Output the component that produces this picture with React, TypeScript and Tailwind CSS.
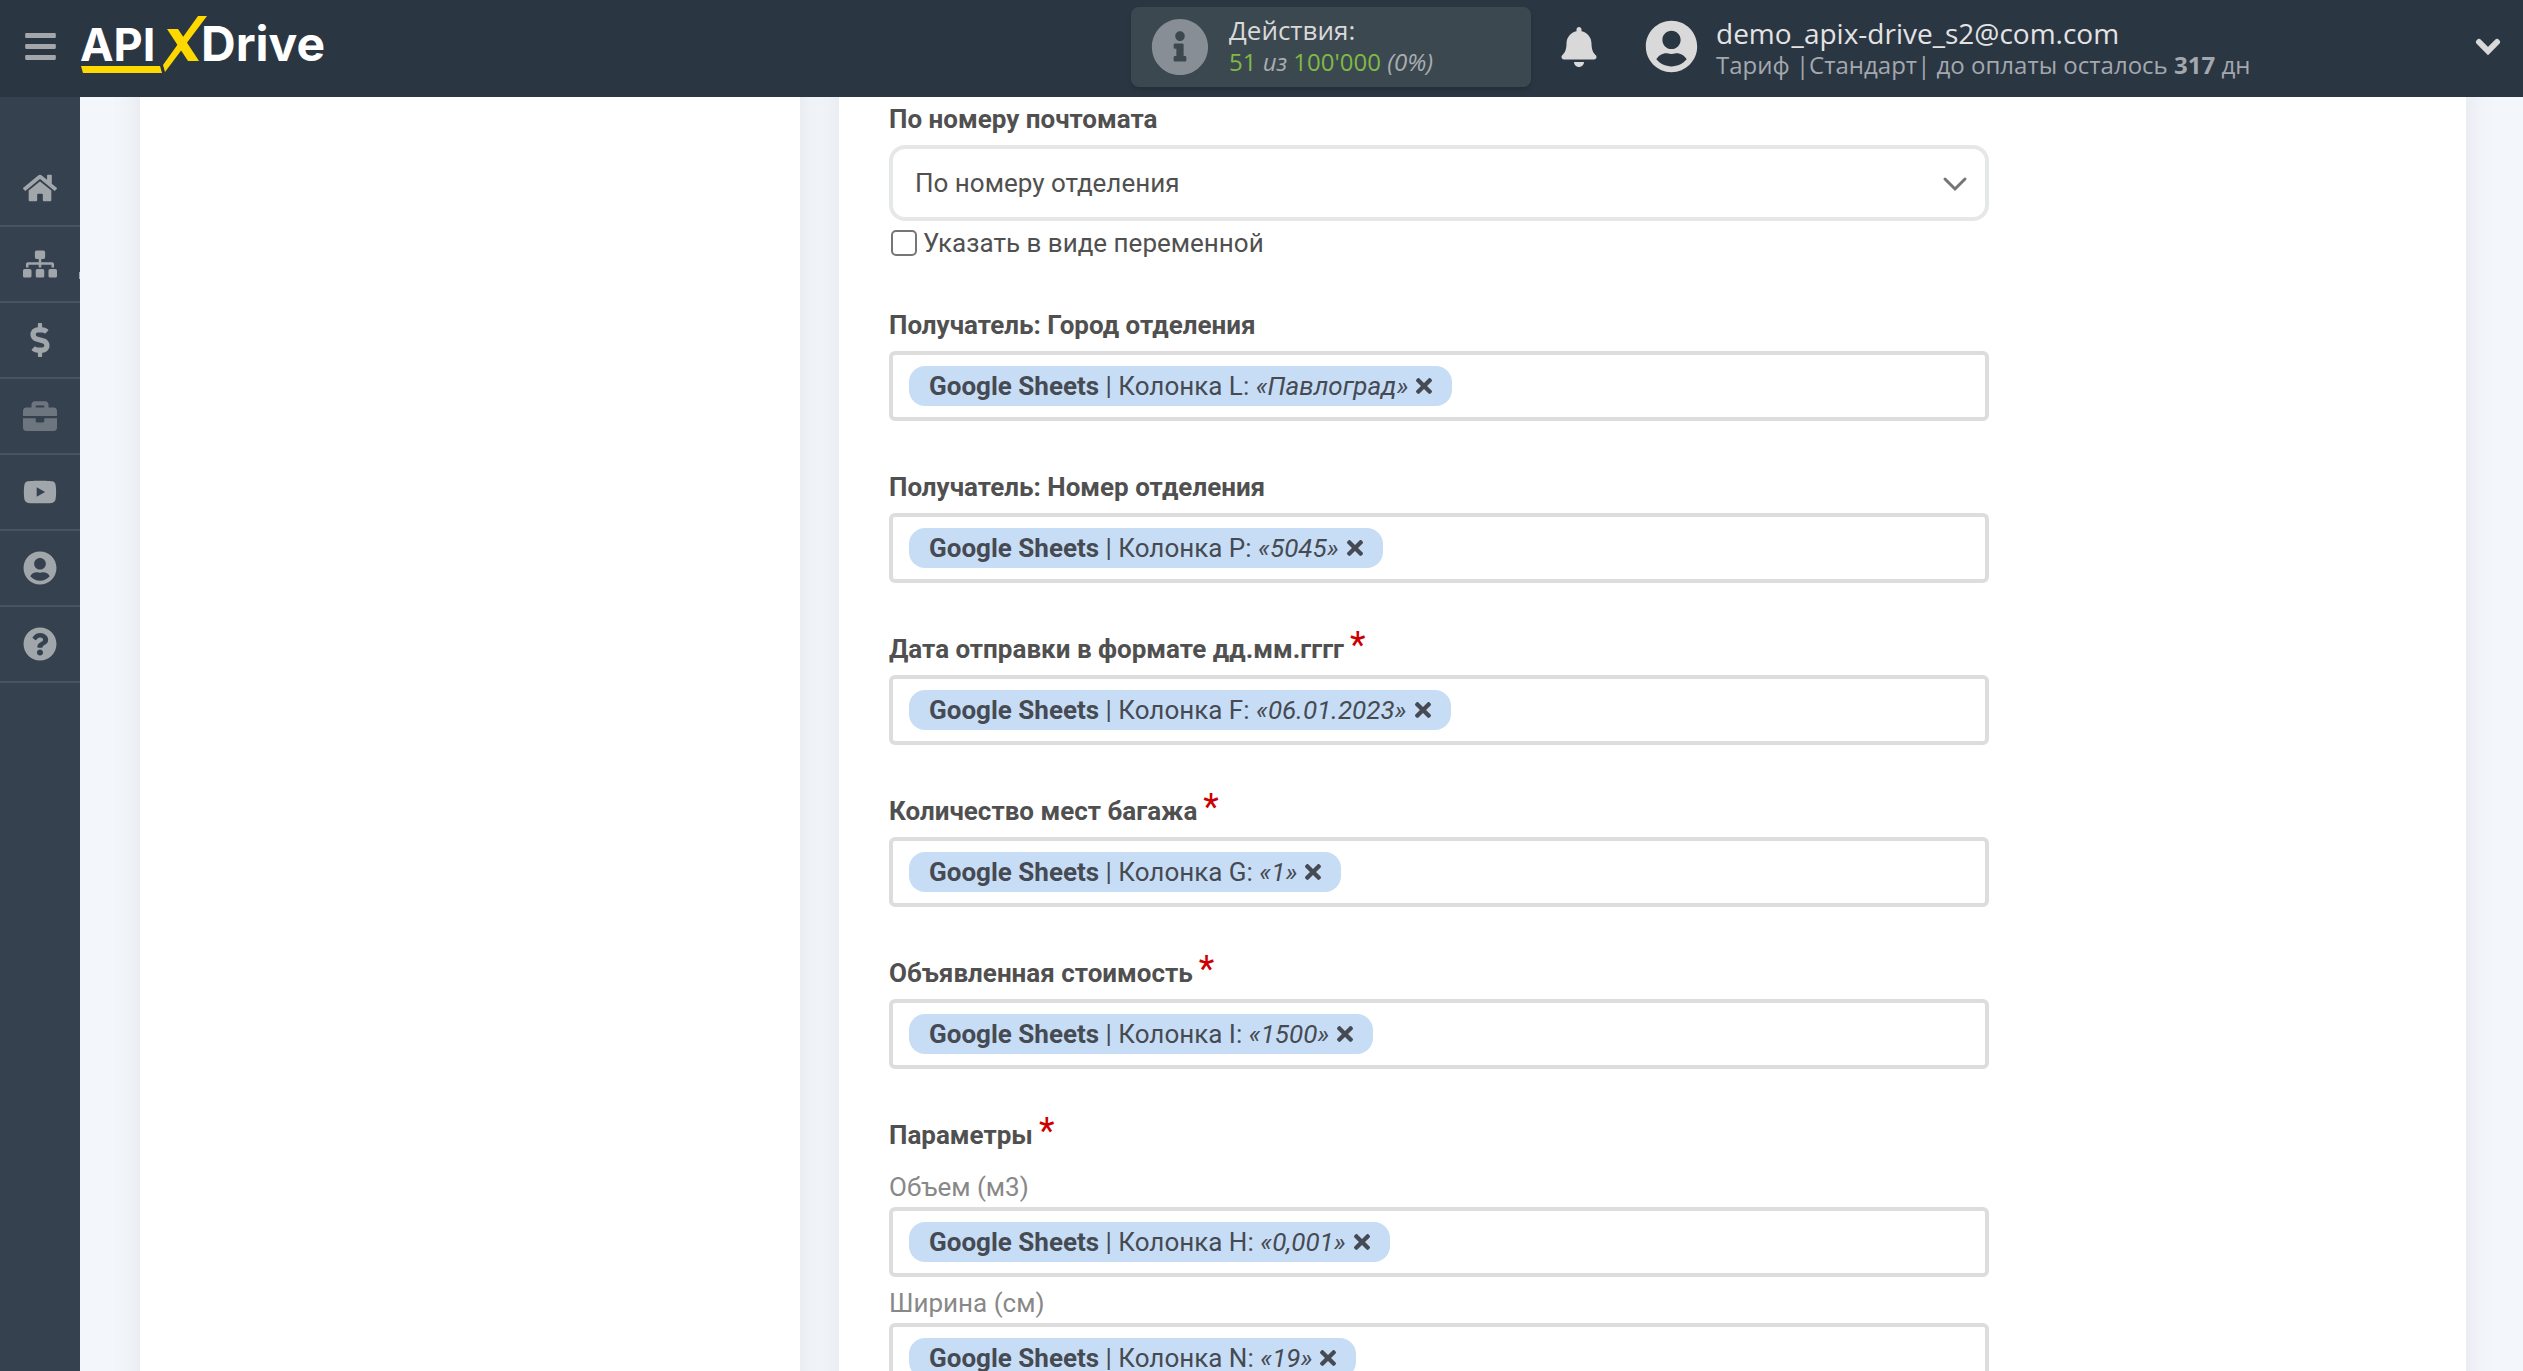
import { useId, useState } from 'react'
import type { ReactNode } from 'react'
import type { IconType } from 'react-icons'
import {
  FaBars,
  FaBell,
  FaBriefcase,
  FaDollarSign,
  FaHome,
  FaInfoCircle,
  FaQuestionCircle,
  FaSitemap,
  FaTimes,
  FaUserCircle,
  FaYoutube,
} from 'react-icons/fa'
import { clsx } from 'clsx'

interface NavItem {
  title: string
  icon: IconType
  dimmed?: boolean
  hasMore?: boolean
}

interface Variable {
  column: string
  value: string
}

interface FieldData {
  label: string
  required?: boolean
  variable: Variable
}

const navItems: NavItem[] = [
  { title: 'Главная', icon: FaHome },
  { title: 'Связи', icon: FaSitemap, hasMore: true },
  { title: 'Оплата', icon: FaDollarSign },
  { title: 'Услуги', icon: FaBriefcase, dimmed: true },
  { title: 'Видео', icon: FaYoutube },
  { title: 'Профиль', icon: FaUserCircle },
  { title: 'Помощь', icon: FaQuestionCircle },
]

const fields: FieldData[] = [
  { label: 'Получатель: Город отделения', variable: { column: 'L', value: 'Павлоград' } },
  { label: 'Получатель: Номер отделения', variable: { column: 'P', value: '5045' } },
  { label: 'Дата отправки в формате дд.мм.гггг', required: true, variable: { column: 'F', value: '06.01.2023' } },
  { label: 'Количество мест багажа', required: true, variable: { column: 'G', value: '1' } },
  { label: 'Объявленная стоимость', required: true, variable: { column: 'I', value: '1500' } },
]

const params: FieldData[] = [
  { label: 'Объем (м3)', variable: { column: 'H', value: '0,001' } },
  { label: 'Ширина (см)', variable: { column: 'N', value: '19' } },
]

function Logo() {
  return (
    <svg width="250" height="97" viewBox="0 0 250 97" role="img" aria-label="APIXDrive">
      <g fill="#fff" fontFamily="Inter, sans-serif" fontWeight="700">
        <text x="0" y="63" fontSize="45">API</text>
        <text x="121" y="63" fontSize="48">Drive</text>
      </g>
      <g fill="#ffd800">
        <path d="M1 68h79l2 7H3z" />
        <path d="M118 18h9L85 74l-2-7z" />
        <path d="M87 31h11l21 32h-11z" />
      </g>
    </svg>
  )
}

function Header() {
  return (
    <header className="relative z-10 flex h-[97px] shrink-0 items-center bg-[#2b3643] pb-1 font-['Open_Sans',sans-serif]">
      <div className="flex flex-[1131_1_0%] items-center">
        <button type="button" aria-label="Меню" className="flex w-20 shrink-0 justify-center">
          <FaBars className="size-[35px] text-[#a3a7ab]" />
        </button>
        <a href="#">
          <Logo />
        </a>
      </div>

      <div className="flex flex-[1392_1_0%] items-center">
        <div className="flex h-20 w-[400px] shrink-0 items-center gap-5 rounded-lg bg-[#3c4850] px-5 shadow-md">
          <FaInfoCircle className="size-[58px] shrink-0 text-[#878e96]" />
          <div className="pb-0.5 whitespace-nowrap">
            <p className="text-[26px] leading-8 text-[#d9d9d9]">Действия:</p>
            <p className="text-2xl leading-8 text-[#a9adb0]">
              <span className="text-[#7fba45]">51</span> <em>из</em>{' '}
              <span className="text-[#7fba45]">100'000</span> <em>(0%)</em>
            </p>
          </div>
        </div>

        <button type="button" aria-label="Уведомления" className="ml-7 shrink-0">
          <FaBell className="size-10 text-[#d9d9d9]" />
        </button>

        <button type="button" className="ml-[46px] flex flex-1 items-center text-left">
          <FaUserCircle className="size-[53px] shrink-0 text-[#d9d9d9]" />
          <span className="ml-[18px] pt-1 whitespace-nowrap">
            <span className="block text-[28px] leading-8 text-[#e3e3e3]">demo_apix-drive_s2@com.com</span>
            <span className="block text-2xl leading-8 text-[#a3a8ae]">
              Тариф |Стандарт| до оплаты осталось <b>317</b> дн
            </span>
          </span>
          <svg
            className="mr-[22px] ml-auto h-[18px] w-[26px] shrink-0"
            viewBox="0 0 26 18"
            fill="none"
            stroke="#d9d9d9"
            strokeWidth="6"
            strokeLinecap="round"
          >
            <path d="M4 4l9 9 9-9" />
          </svg>
        </button>
      </div>
    </header>
  )
}

function Sidebar() {
  return (
    <nav className="w-20 shrink-0 bg-[#364150] pt-[54px]">
      {navItems.map(({ title, icon: Icon, dimmed, hasMore }) => (
        <a
          key={title}
          href="#"
          aria-label={title}
          className={clsx(
            'relative flex h-[76px] items-center justify-center border-b-2 border-[#475563]',
            dimmed ? 'text-[#6d757f]' : 'text-[#a1a6aa]'
          )}
        >
          <Icon className="h-[34px] w-auto" />
          {hasMore && <span className="absolute right-0 bottom-[22px] h-[7px] w-px bg-[#a1a6aa]" />}
        </a>
      ))}
    </nav>
  )
}

function VariableInput({ id, variable }: { id: string; variable: Variable }) {
  const [removed, setRemoved] = useState(false)

  return (
    <div className="flex h-[70px] items-center rounded-md border-4 border-[#dddddd] bg-white px-4">
      {!removed && (
        <span className="flex h-10 shrink-0 items-center rounded-2xl bg-[#c7ddf5] px-5 text-[#464a53]">
          <span className="whitespace-nowrap">
            <b>Google Sheets</b> | Колонка {variable.column}: <i>«{variable.value}»</i>
          </span>
          <button type="button" aria-label="Удалить" onClick={() => setRemoved(true)} className="ml-2">
            <FaTimes className="h-6 w-4" />
          </button>
        </span>
      )}
      <input id={id} type="text" className="min-w-0 flex-1 bg-transparent outline-none" />
    </div>
  )
}

function FieldLabel({ htmlFor, required, children }: { htmlFor?: string; required?: boolean; children: ReactNode }) {
  return (
    <label htmlFor={htmlFor} className="mb-1.5 flex h-10 items-center gap-1.5 font-bold">
      {children}
      {required && <span className="self-start text-4xl leading-8 font-normal text-[#cc0000]">*</span>}
    </label>
  )
}

function Field({ label, required, variable }: FieldData) {
  const id = useId()

  return (
    <div>
      <FieldLabel htmlFor={id} required={required}>
        {label}
      </FieldLabel>
      <VariableInput id={id} variable={variable} />
    </div>
  )
}

function ParamField({ label, variable }: FieldData) {
  const id = useId()

  return (
    <div className="mt-1.5">
      <label htmlFor={id} className="block leading-10 text-[#888888]">
        {label}
      </label>
      <VariableInput id={id} variable={variable} />
    </div>
  )
}

function DeliveryType() {
  return (
    <div>
      <FieldLabel htmlFor="delivery-type">По номеру почтомата</FieldLabel>
      <div className="relative">
        <select
          id="delivery-type"
          className="h-[76px] w-full appearance-none rounded-2xl border-4 border-[#e6e7e9] bg-white px-[22px]"
        >
          <option>По номеру отделения</option>
        </select>
        <svg
          className="pointer-events-none absolute top-[31px] right-5 h-4 w-7"
          viewBox="0 0 28 16"
          fill="none"
          stroke="#757575"
          strokeWidth="3"
          strokeLinecap="round"
        >
          <path d="M4 3l10 10L24 3" />
        </svg>
      </div>
      <label className="mt-1.5 flex h-8 items-center gap-1.5 pl-0.5">
        <input
          type="checkbox"
          className="size-[26px] appearance-none rounded-[5px] border-2 border-[#767676] bg-white checked:border-[#0075ff] checked:bg-[#0075ff]"
        />
        Указать в виде переменной
      </label>
    </div>
  )
}

export default function App() {
  return (
    <div className="flex h-screen flex-col overflow-hidden bg-[#f3f7fc]">
      <Header />
      <div className="flex min-h-0 flex-1">
        <Sidebar />
        {/* cards run past both edges of the scroll area */}
        <main className="-my-10 grid min-w-0 flex-1 grid-cols-[660fr_1627fr] gap-[39px] pr-[57px] pl-[60px] font-[Roboto,sans-serif] text-[26px] text-[#505050]">
          <aside className="bg-white shadow-[0_0_30px_rgba(0,0,0,0.08)]" />
          <section className="bg-white px-[50px] pt-[42px] shadow-[0_0_30px_rgba(0,0,0,0.08)]">
            <form className="flex max-w-[1100px] flex-col gap-[46px]">
              <DeliveryType />
              {fields.map((field) => (
                <Field key={field.label} {...field} />
              ))}
              <div className="flex flex-col">
                <FieldLabel required>Параметры</FieldLabel>
                {params.map((field) => (
                  <ParamField key={field.label} {...field} />
                ))}
              </div>
            </form>
          </section>
        </main>
      </div>
    </div>
  )
}
